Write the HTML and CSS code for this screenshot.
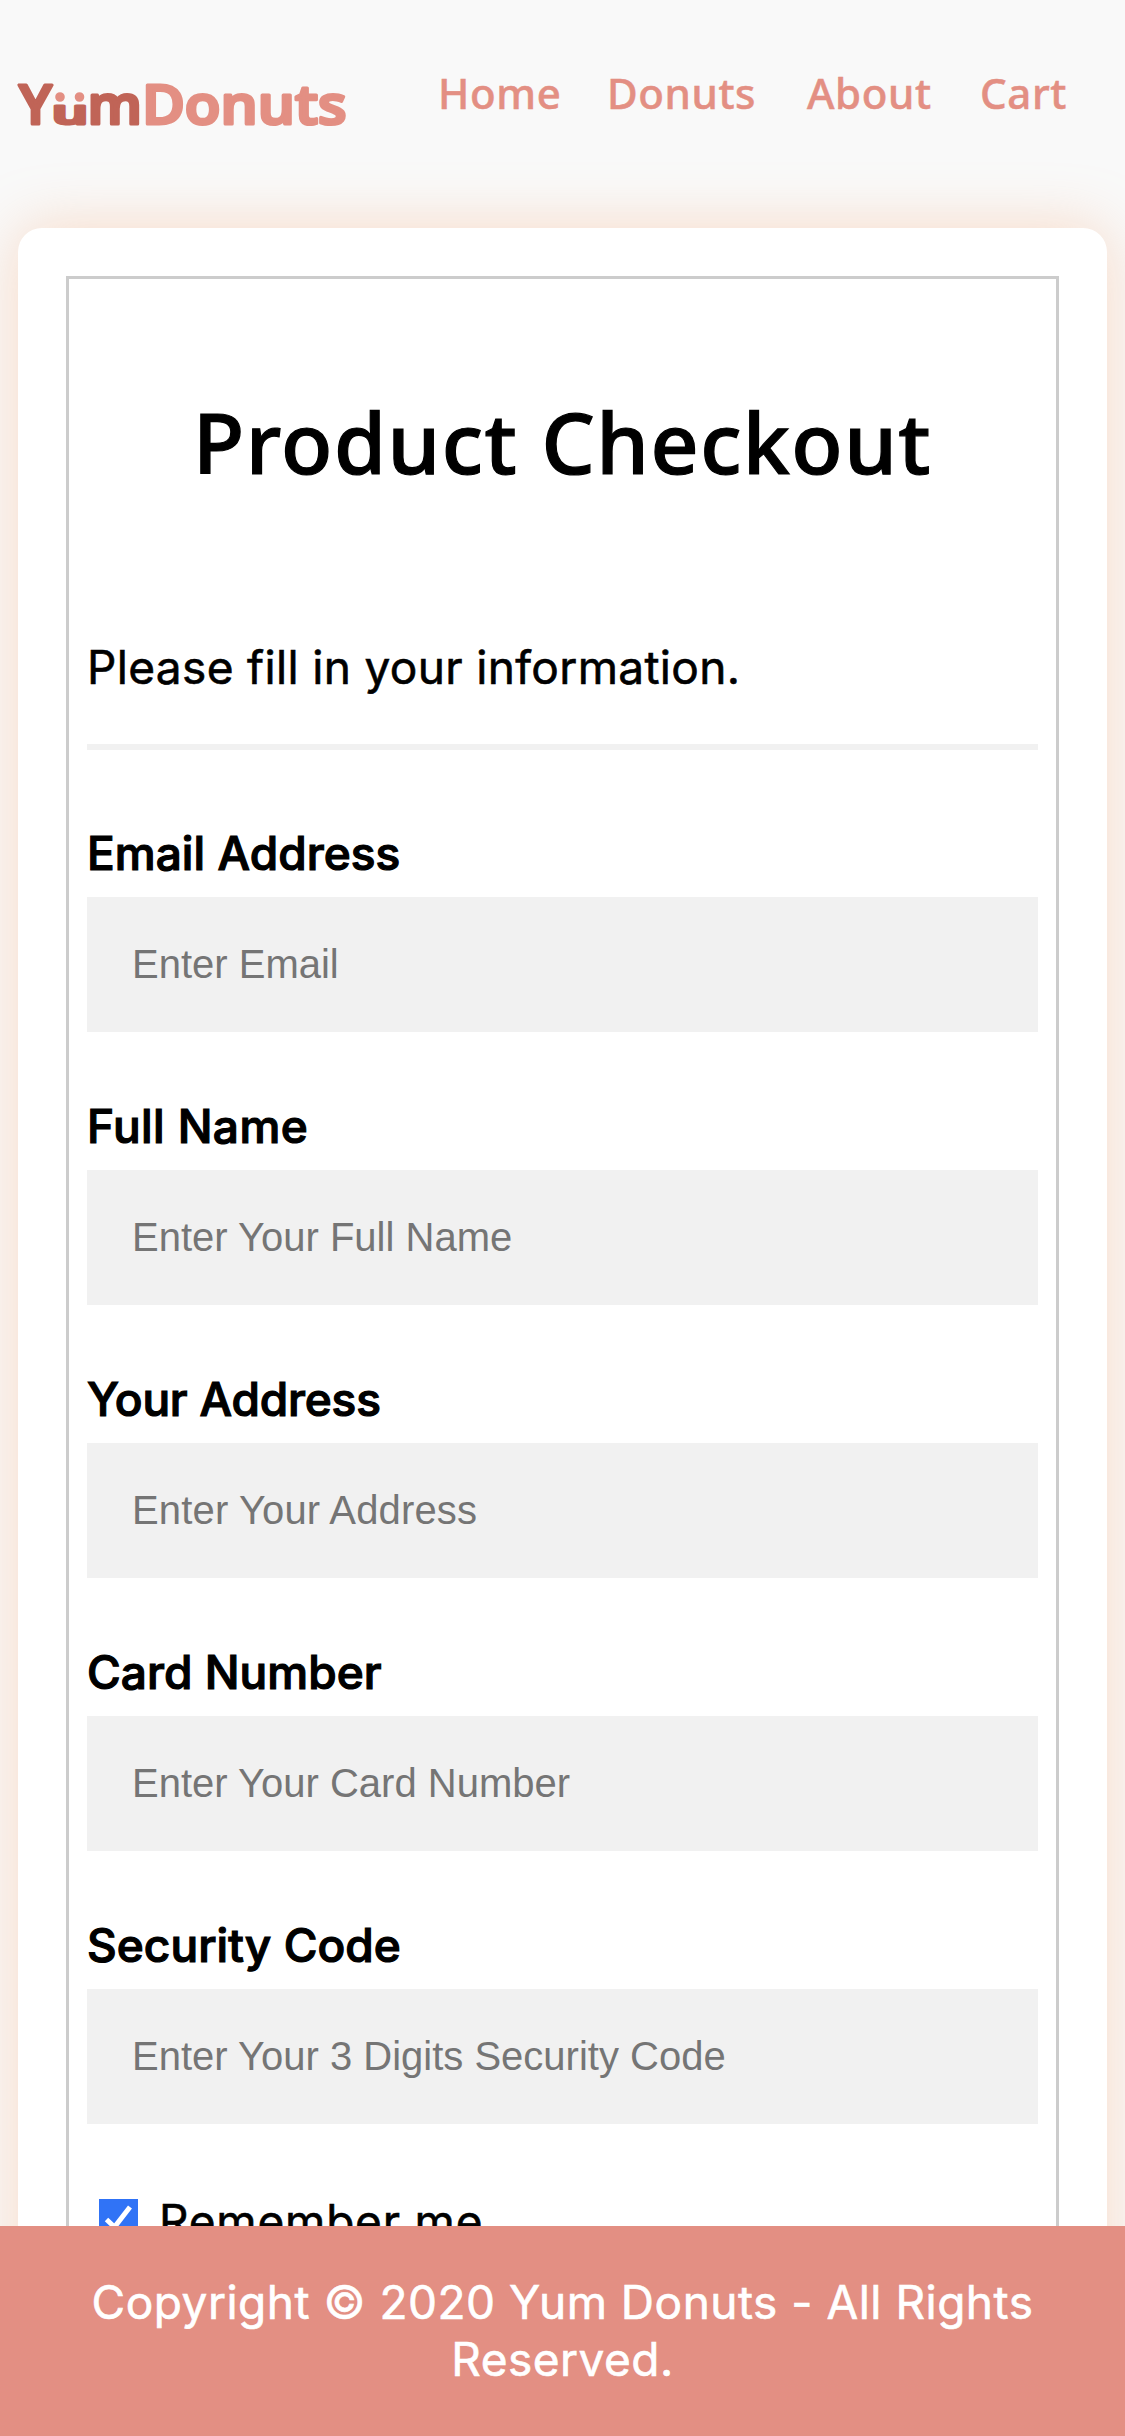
FILE: index.html
```
<!DOCTYPE html>
<html lang="en">
<head>
<meta charset="utf-8">
<title>Yum Donuts - Checkout</title>
<link rel="stylesheet" href="styles.css">
</head>
<body>
<header class="header">
  <svg class="logo" viewBox="0 0 370 100" role="img" aria-label="YumDonuts">
    <g class="logo-dark">
      <text x="19" y="61" textLength="33" lengthAdjust="spacingAndGlyphs">Y</text>
      <text class="logo-u" x="52" y="61" textLength="36" lengthAdjust="spacingAndGlyphs">u</text>
      <text x="87.5" y="61" textLength="54.5" lengthAdjust="spacingAndGlyphs">m</text>
    </g>
    <g class="logo-light">
      <text x="142" y="61" textLength="204.5" lengthAdjust="spacingAndGlyphs">Donuts</text>
      <circle cx="60" cy="34" r="3.2"/>
      <circle cx="79.5" cy="34" r="3.2"/>
    </g>
  </svg>
  <nav class="nav">
    <a>Home</a><a>Donuts</a><a>About</a><a>Cart</a>
  </nav>
</header>
<main class="card">
  <form class="form">
    <h1 class="title">Product Checkout</h1>
    <p class="intro">Please fill in your information.</p>
    <hr class="rule">
    <label class="label">Email Address</label>
    <input class="field" type="text" placeholder="Enter Email">
    <label class="label loose">Full Name</label>
    <input class="field" type="text" placeholder="Enter Your Full Name">
    <label class="label tight">Your Address</label>
    <input class="field wide" type="text" placeholder="Enter Your Address">
    <label class="label">Card Number</label>
    <input class="field" type="text" placeholder="Enter Your Card Number">
    <label class="label">Security Code</label>
    <input class="field" type="text" placeholder="Enter Your 3 Digits Security Code">
    <div class="remember">
      <svg class="check" viewBox="0 0 39 39"><path d="M7.5 20.5 15.5 28 31 8"/></svg>
      <span>Remember me</span>
    </div>
  </form>
</main>
<footer class="footer">Copyright © 2020 Yum Donuts - All Rights<br>Reserved.</footer>
</body>
</html>
```
FILE: styles.css
```
* { box-sizing: border-box; }
body {
  margin: 0;
  height: 2436px;
  overflow: hidden;
  background: #f9f9f9;
  color: #000;
  font: 46px/57px Inter, sans-serif;
  -webkit-text-stroke: .6px currentColor;
}
.header {
  display: grid;
  grid-template-columns: 437px 1fr;
  align-items: start;
  height: 228px;
  padding-top: 63px;
}
.logo {
  width: 370px;
  height: 100px;
  font: 600 55px "Open Sans", sans-serif;
  stroke-width: 3.2;
  stroke-linejoin: round;
  -webkit-text-stroke: 0;
}
.logo-dark { fill: #c06457; stroke: #c06457; }
.logo-light { fill: #e38f83; stroke: #e38f83; }
.logo text { stroke-width: 3.2px; }
.logo .logo-u { font-size: 33px; }
.nav {
  display: grid;
  grid-template-columns: 169px 200px 173px 1fr;
  padding-left: 1px;
  font: 500 42px/60px "Noto Sans", sans-serif;
  letter-spacing: .6px;
  color: #e38f83;
  -webkit-text-stroke: .5px #e38f83;
}
.card {
  height: 2300px;
  margin: 0 18px;
  padding: 48px;
  background: #fff;
  border-radius: 24px;
  box-shadow: 0 0 60px rgba(248, 169, 120, .4);
}
.form {
  display: flex;
  flex-direction: column;
  height: 2200px;
  padding: 107px 18px 0;
  border: 3px solid #ccc;
}
.title {
  margin: 0 0 141px;
  font: 500 84px/112px "Noto Sans", sans-serif;
  letter-spacing: 1.5px;
  text-align: center;
  -webkit-text-stroke: 1.2px #000;
}
.intro { margin: 0 0 48px; letter-spacing: .35px; }
.rule {
  width: 100%;
  height: 6px;
  margin: 0 0 75px;
  border: 0;
  background: #f1f1f1;
}
.label {
  height: 57px;
  margin-bottom: 15px;
  font-weight: 500;
  letter-spacing: .05px;
  -webkit-text-stroke: 1.2px #000;
}
.label.loose { letter-spacing: .4px; }
.label.tight { letter-spacing: -.2px; }
.field {
  width: 100%;
  height: 135px;
  margin: 0 0 66px;
  padding: 0 45px;
  border: 0;
  border-radius: 0;
  background: #f1f1f1;
  font: 40px "Liberation Sans", Arial, sans-serif;
  -webkit-text-stroke: 0;
}
.wide { letter-spacing: .15px; }
.field::placeholder { color: #757575; }
.remember {
  display: flex;
  gap: 21px;
  margin-top: 3px;
  padding-left: 12px;
  letter-spacing: .8px;
}
.check {
  width: 39px;
  height: 39px;
  margin-top: 6px;
  background: #3073f6;
  fill: none;
  stroke: #fff;
  stroke-width: 5;
}
.footer {
  position: fixed;
  right: 0;
  bottom: 0;
  left: 0;
  height: 210px;
  padding-top: 48px;
  background: #e38f83;
  color: #fff;
  letter-spacing: .5px;
  text-align: center;
}
```
